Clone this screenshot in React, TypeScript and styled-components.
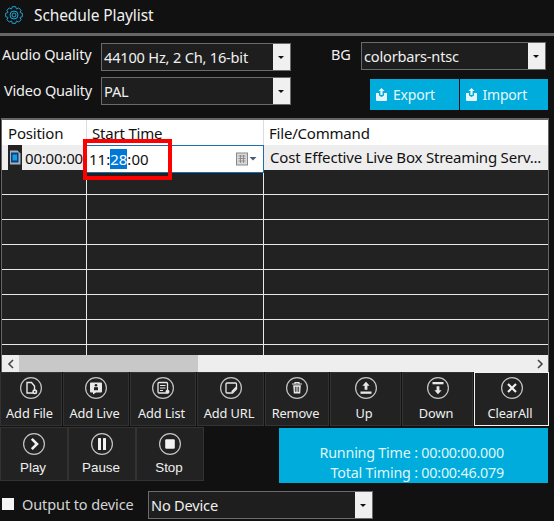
import React from 'react'
import styled, { createGlobalStyle } from 'styled-components'

const Global = createGlobalStyle`
  html, body {
    margin: 0;
    padding: 0;
    background: #111;
  }
  * {
    box-sizing: border-box;
  }
`

const Ring = ({ children }: { children: React.ReactNode }) => (
  <svg width="24" height="24" viewBox="0 0 24 24" fill="none">
    <circle cx="12" cy="12" r="10.4" stroke="#c4c4c4" strokeWidth="1.2" />
    {children}
  </svg>
)

const Wh = '#e8e8e8'

const icons: Record<string, React.ReactNode> = {
  file: (
    <>
      <path d="M8 6.5h4.5l3 3.5v7H8z" stroke={Wh} strokeWidth="1.4" />
      <circle cx="15.8" cy="15.8" r="2.5" fill={Wh} />
      <circle cx="15.8" cy="15.8" r=".9" fill="#222" />
    </>
  ),
  live: (
    <>
      <path d="M7 6.5h10a1 1 0 0 1 1 1v8a1 1 0 0 1-1 1h-5l-3 2v-2H7a1 1 0 0 1-1-1v-8a1 1 0 0 1 1-1z" fill={Wh} />
      <circle cx="12" cy="9.3" r="1.3" fill="#222" />
      <rect x="10" y="11.2" width="4" height="3" fill="#222" />
    </>
  ),
  list: (
    <>
      <rect x="7" y="6.5" width="9.5" height="10.5" rx="1" stroke={Wh} strokeWidth="1.3" />
      <path d="M9 9.5h5.5M9 12h5.5M9 14.5h3" stroke={Wh} strokeWidth="1.2" />
      <circle cx="16.5" cy="15.8" r="2" fill={Wh} />
    </>
  ),
  url: (
    <>
      <path d="M8 7h8.5a1 1 0 0 1 1 1v5l-4 4H8a1 1 0 0 1-1-1V8a1 1 0 0 1 1-1z" stroke={Wh} strokeWidth="1.3" />
      <path d="M12.5 15l4.5-4.5 1.2 1.2-4.5 4.5h-1.2z" fill={Wh} />
    </>
  ),
  remove: (
    <>
      <path d="M7 8h10M10 8V6.5h4V8" stroke={Wh} strokeWidth="1.2" />
      <path d="M8.2 9.2h7.6l-.6 8.3H8.8z" fill={Wh} />
      <path d="M10.4 10.8v5M12 10.8v5M13.6 10.8v5" stroke="#222" strokeWidth=".8" />
    </>
  ),
  up: (
    <>
      <path d="M12 5.8l3.6 4h-2.2v4h-2.8v-4H8.4z" fill={Wh} />
      <rect x="6.5" y="15.5" width="11" height="2.3" fill={Wh} />
    </>
  ),
  down: (
    <>
      <rect x="6.5" y="6" width="11" height="2.3" fill={Wh} />
      <path d="M12 18.2l-3.6-4h2.2v-4h2.8v4h2.2z" fill={Wh} />
    </>
  ),
  clear: <path d="M8 8l8 8M16 8l-8 8" stroke="#f2f2f2" strokeWidth="2.2" />,
  play: <path d="M9.8 6.8L15 12l-5.2 5.2" stroke="#f2f2f2" strokeWidth="2.6" />,
  pause: (
    <>
      <rect x="8" y="6" width="3" height="12" rx=".6" fill="#f2f2f2" />
      <rect x="13" y="6" width="3" height="12" rx=".6" fill="#f2f2f2" />
    </>
  ),
  stop: <rect x="7.2" y="7.2" width="9.6" height="9.6" rx="1.2" fill="#f2f2f2" />,
}

// outline of a cog with 8 teeth
const gearPath = () => {
  const pts: string[] = []
  for (let i = 0; i < 8; i++) {
    const a = (i * Math.PI) / 4
    const spots: [number, number][] = [
      [6.6, -0.36],
      [8.5, -0.2],
      [8.5, 0.2],
      [6.6, 0.36],
    ]
    spots.forEach(([r, d]) => {
      pts.push(`${(9 + r * Math.cos(a + d)).toFixed(2)} ${(9 + r * Math.sin(a + d)).toFixed(2)}`)
    })
  }
  return `M${pts.join('L')}Z`
}

const Gear = () => (
  <svg width="18" height="18" viewBox="0 0 18 18" fill="none" stroke="#1aa7d8" strokeWidth="1">
    <path d={gearPath()} />
    <circle cx="9" cy="9" r="4" />
    <circle cx="9" cy="9" r="2" />
  </svg>
)

const Tray = () => (
  <svg width="13" height="13" viewBox="0 0 13 13" fill="#e4f6fb">
    <path d="M6.5 0l3 3H7.6v4H5.4V3H3.5z" />
    <path d="M1 5h3v2.5l2.5 1.5L9 7.5V5h3v7a1 1 0 0 1-1 1H2a1 1 0 0 1-1-1z" />
  </svg>
)

const topButtons = [
  { label: 'Add File', icon: 'file', width: 62 },
  { label: 'Add Live', icon: 'live', width: 66 },
  { label: 'Add List', icon: 'list', width: 66 },
  { label: 'Add URL', icon: 'url', width: 67 },
  { label: 'Remove', icon: 'remove', width: 64 },
  { label: 'Up', icon: 'up', width: 71 },
  { label: 'Down', icon: 'down', width: 71 },
  { label: 'ClearAll', icon: 'clear', width: 75, active: true },
]

const playButtons = [
  { label: 'Play', icon: 'play' },
  { label: 'Pause', icon: 'pause' },
  { label: 'Stop', icon: 'stop' },
]

const Select = ({ value, width }: { value: string; width: number }) => (
  <SelectBox $width={width}>
    <SelectText>{value}</SelectText>
    <SelectArrow />
  </SelectBox>
)

export default function App() {
  return (
    <Page>
      <Global />
      <Title>
        <Gear />
        <TitleText>Schedule Playlist</TitleText>
      </Title>
      <Settings>
        <SettingsLeft>
          <FieldRow>
            <FieldLabel>Audio Quality</FieldLabel>
            <Select value="44100 Hz, 2 Ch, 16-bit" width={190} />
          </FieldRow>
          <FieldRow>
            <FieldLabel $indent>Video Quality</FieldLabel>
            <Select value="PAL" width={190} />
          </FieldRow>
        </SettingsLeft>
        <SettingsRight>
          <BgRow>
            <BgLabel>BG</BgLabel>
            <Select value="colorbars-ntsc" width={185} />
          </BgRow>
          <CyanButtons>
            <CyanButton>
              <Tray />
              Export
            </CyanButton>
            <CyanButton>
              <Tray />
              Import
            </CyanButton>
          </CyanButtons>
        </SettingsRight>
      </Settings>

      <Table>
        <HeaderRow>
          <HeaderCell>Position</HeaderCell>
          <HeaderCell>Start Time</HeaderCell>
          <HeaderCell>File/Command</HeaderCell>
        </HeaderRow>
        <DataRow>
          <PositionCell>
            <RowIcon viewBox="0 0 11 14">
              <path d="M0 0h8l3 3v11H0z" fill="#9fb4c6" />
              <rect x="1.5" y="2" width="7.5" height="10" fill="#0d3f78" />
              <rect x="3" y="4" width="4.5" height="6" fill="#1a9be0" />
            </RowIcon>
            <span>00:00:00</span>
          </PositionCell>
          <Cell />
          <Cell>Cost Effective Live Box Streaming Serv...</Cell>
          <TimeEditor>
            <span>
              11:<Selected>28</Selected>:00
            </span>
            <svg width="21" height="14" viewBox="0 0 21 14">
              <rect x="0.5" y="1" width="11" height="12" fill="#d8d8d8" stroke="#888" />
              <path d="M2.5 4h7M2.5 6.5h7M2.5 9h7M4.5 3v8M7.5 3v8" stroke="#808080" strokeWidth=".8" />
              <path d="M13.5 5h7l-3.5 3.5z" fill="#4a5a78" />
            </svg>
          </TimeEditor>
          <Highlight />
        </DataRow>
        {Array.from({ length: 7 }).map((_, i) => (
          <EmptyRow key={i}>
            <div />
            <div />
            <div />
          </EmptyRow>
        ))}
        <EmptyRow $last>
          <div />
          <div />
          <div />
        </EmptyRow>
        <Scrollbar>
          <ScrollArrow>
            <svg width="8" height="10" viewBox="0 0 8 10" fill="none" stroke="#444" strokeWidth="1.6">
              <path d="M6 1L2 5l4 4" />
            </svg>
          </ScrollArrow>
          <ScrollThumb />
          <ScrollArrow $end>
            <svg width="8" height="10" viewBox="0 0 8 10" fill="none" stroke="#444" strokeWidth="1.6">
              <path d="M2 1l4 4-4 4" />
            </svg>
          </ScrollArrow>
        </Scrollbar>
      </Table>

      <Toolbar>
        {topButtons.map((b) => (
          <ToolButton key={b.label} $width={b.width} $active={b.active}>
            <Ring>{icons[b.icon]}</Ring>
            <ToolLabel>{b.label}</ToolLabel>
          </ToolButton>
        ))}
      </Toolbar>

      <Transport>
        <PlayGroup>
          {playButtons.map((b) => (
            <PlayButton key={b.label}>
              <Ring>{icons[b.icon]}</Ring>
              <PlayLabel>{b.label}</PlayLabel>
            </PlayButton>
          ))}
        </PlayGroup>
        <Timing>
          <span>Running Time : 00:00:00.000</span>
          <span>Total Timing : 00:00:46.079</span>
        </Timing>
      </Transport>

      <Output>
        <Check />
        <OutputLabel>Output to device</OutputLabel>
        <Select value="No Device" width={225} />
      </Output>
    </Page>
  )
}

const uiFont = `'Noto Sans', 'Open Sans', sans-serif`

const Page = styled.div`
  width: 554px;
  height: 521px;
  overflow: hidden;
  background: #111;
  color: #f0f0f0;
  font-family: ${uiFont};
  font-size: 15px;
  letter-spacing: -0.2px;
`
const Title = styled.div`
  display: flex;
  align-items: center;
  gap: 11px;
  height: 36px;
  padding: 0 0 3px 5px;
  border-bottom: 3px solid #666;
`
const TitleText = styled.div`
  font-size: 15.5px;
  letter-spacing: -0.1px;
`
const Settings = styled.div`
  display: flex;
  height: 82px;
  padding-top: 7px;
`
const SettingsLeft = styled.div`
  display: flex;
  flex-direction: column;
  gap: 6px;
  width: 331px;
`
const FieldRow = styled.div`
  display: flex;
  align-items: center;
  height: 28px;
  width: 291px;
  justify-content: space-between;
  padding-left: 2px;
`
const FieldLabel = styled.div<{ $indent?: boolean }>`
  margin-left: ${(p) => (p.$indent ? '2px' : '0')};
  margin-top: ${(p) => (p.$indent ? '-2px' : '-6px')};
  font-size: 14.5px;
  white-space: nowrap;
`
const SelectBox = styled.div<{ $width: number }>`
  display: flex;
  flex: none;
  align-items: stretch;
  width: ${(p) => p.$width}px;
  height: 28px;
  background: #1e1e1e;
  border: 1px solid #6b6b6b;
`
const SelectText = styled.div`
  flex: 1;
  font-size: 14.6px;
  line-height: 26px;
  padding-left: 2px;
  white-space: nowrap;
`
const SelectArrow = styled.div`
  position: relative;
  width: 17px;
  background: #f0f0f0;
  &::after {
    content: '';
    position: absolute;
    left: 5px;
    top: 12px;
    border: 3px solid transparent;
    border-top: 3px solid #111;
    border-bottom: 0;
  }
`
const SettingsRight = styled.div`
  display: flex;
  flex-direction: column;
  width: 223px;
`
const BgRow = styled.div`
  display: flex;
  align-items: center;
  height: 28px;
  margin-top: -1px;
`
const BgLabel = styled.div`
  width: 30px;
  margin-top: -4px;
  font-size: 14.5px;
`
const CyanButtons = styled.div`
  display: flex;
  gap: 1px;
  width: 178px;
  margin: 9px 0 0 39px;
`
const CyanButton = styled.div`
  display: flex;
  flex: 1;
  align-items: center;
  gap: 5px;
  height: 31px;
  padding-left: 5px;
  background: #00acdb;
  color: #e6f7fb;
  font-size: 14px;
`
const Table = styled.div`
  width: 548px;
  margin-left: 1px;
  height: 254px;
  border: 1px solid #666;
  border-width: 2px 1px 0 1px;
  background: #222;
  color: #111;
  display: flex;
  flex-direction: column;
`
const gridColumns = `85px 177px 1fr`
const HeaderRow = styled.div`
  display: grid;
  flex: none;
  grid-template-columns: ${gridColumns};
  height: 25px;
  background: #fff;
`
const HeaderCell = styled.div`
  padding: 1px 0 0 5px;
  line-height: 24px;
  border-right: 1px solid #ddd;
  &:first-child {
    padding-left: 6px;
  }
  &:last-child {
    border-right: 0;
  }
`
const DataRow = styled.div`
  position: relative;
  display: grid;
  flex: none;
  grid-template-columns: ${gridColumns};
  height: 25px;
  background: #eee;
`
const PositionCell = styled.div`
  display: flex;
  align-items: center;
  gap: 3px;
  padding-left: 6px;
  white-space: nowrap;
  overflow: hidden;
`
const RowIcon = styled.svg`
  flex: none;
  width: 14px;
  height: 25px;
  padding: 5px 1.5px;
  background: #222;
`
const Cell = styled.div`
  padding-left: 6px;
  line-height: 25px;
  white-space: nowrap;
  overflow: hidden;
`
const TimeEditor = styled.div`
  position: absolute;
  left: 84px;
  top: 0;
  width: 178px;
  height: 28px;
  display: flex;
  align-items: center;
  justify-content: space-between;
  padding: 0 6px 0 2px;
  background: #fff;
  border: 1px solid #1a6fb0;
  font-size: 15px;
  letter-spacing: 0;
`
const Selected = styled.span`
  background: #0078d7;
  color: #fff;
`
const Highlight = styled.div`
  position: absolute;
  left: 81px;
  top: -6px;
  width: 89px;
  height: 41px;
  border: 4px solid #f00;
`
const EmptyRow = styled.div<{ $last?: boolean }>`
  display: grid;
  grid-template-columns: ${gridColumns};
  height: ${(p) => (p.$last ? 'auto' : '25px')};
  flex: ${(p) => (p.$last ? '1' : 'none')};
  border-bottom: ${(p) => (p.$last ? '0' : '1px solid #e8e8e8')};
  & > div {
    border-right: 1px solid #e8e8e8;
  }
  & > div:last-child {
    border-right: 0;
  }
`
const Scrollbar = styled.div`
  display: flex;
  flex: none;
  align-items: stretch;
  height: 17px;
  background: #eee;
`
const ScrollArrow = styled.div<{ $end?: boolean }>`
  display: flex;
  align-items: center;
  justify-content: center;
  width: 17px;
  margin-left: ${(p) => (p.$end ? 'auto' : '0')};
`
const ScrollThumb = styled.div`
  width: 179px;
  background: #c8c8c8;
`
const Toolbar = styled.div`
  display: flex;
  gap: 1px;
  height: 54px;
`
const ToolButton = styled.div<{ $width: number; $active?: boolean }>`
  display: flex;
  flex-direction: column;
  align-items: center;
  flex: none;
  width: ${(p) => p.$width}px;
  height: 54px;
  padding-top: 3px;
  background: #222;
  border: 1px solid ${(p) => (p.$active ? '#f2f2f2' : '#333')};
`
const ToolLabel = styled.div`
  font-size: 12.8px;
  line-height: 18px;
  margin: 4px 3px 0 0;
  letter-spacing: -0.1px;
`
const Transport = styled.div`
  display: flex;
  justify-content: space-between;
  height: 61px;
  padding-top: 1px;
`
const PlayGroup = styled.div`
  display: flex;
  height: 54px;
`
const PlayButton = styled.div`
  display: flex;
  flex-direction: column;
  align-items: center;
  width: 68px;
  height: 54px;
  padding-top: 4px;
  background: #222;
  border: 1px solid #333;
`
const PlayLabel = styled.div`
  font-family: 'Liberation Sans', Arial, sans-serif;
  font-size: 13.4px;
  letter-spacing: 0;
  line-height: 18px;
  margin: 3px 2px 0 0;
`
const Timing = styled.div`
  display: flex;
  flex-direction: column;
  align-items: flex-end;
  justify-content: flex-end;
  width: 269px;
  height: 55px;
  margin: 1px 6px 0 0;
  padding: 0 44px 0 0;
  background: #00acdb;
  color: #dff5fb;
  font-size: 14.3px;
  line-height: 20px;
`
const Output = styled.div`
  display: flex;
  align-items: center;
  height: 28px;
  margin-top: 4px;
  padding-left: 2px;
`
const Check = styled.div`
  width: 12px;
  height: 12px;
  margin-top: -2px;
  background: #f4f4f4;
`
const OutputLabel = styled.div`
  width: 126px;
  margin: -3px 0 0 8px;
  color: #d4d4d4;
  font-size: 14.5px;
  letter-spacing: -0.1px;
`
